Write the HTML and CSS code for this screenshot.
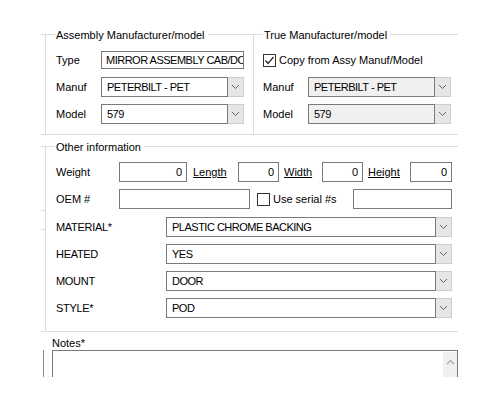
FILE: index.html
```html
<!DOCTYPE html>
<html lang="en">
<head>
    <meta charset="UTF-8">
    <meta name="viewport" content="width=device-width, initial-scale=1.0">
    <title>Part Details</title>
    <link rel="stylesheet" href="styles.css">
</head>
<body>
    <div class="form">
        <div class="top">
            <div class="group assy">
                <div class="legend">
                    <span class="stub"></span>
                    <span class="corner"></span>
                    <span class="legend-text">Assembly Manufacturer/model</span>
                    <span class="rule"></span>
                </div>
                <div class="group-body">
                    <div class="row">
                        <label class="lbl">Type</label>
                        <input class="field type-field" type="text" value="MIRROR ASSEMBLY CAB/DOOR">
                    </div>
                    <div class="row">
                        <label class="lbl">Manuf</label>
                        <div class="combo">
                            <span class="combo-box">PETERBILT - PET</span>
                            <span class="combo-btn"><svg width="9" height="6" viewBox="0 0 9 6"><polyline points="1,1 4.5,4.5 8,1" fill="none" stroke="#666" stroke-width="1"/></svg></span>
                        </div>
                    </div>
                    <div class="row">
                        <label class="lbl">Model</label>
                        <div class="combo">
                            <span class="combo-box">579</span>
                            <span class="combo-btn"><svg width="9" height="6" viewBox="0 0 9 6"><polyline points="1,1 4.5,4.5 8,1" fill="none" stroke="#666" stroke-width="1"/></svg></span>
                        </div>
                    </div>
                </div>
            </div>

            <div class="group true">
                <div class="legend">
                    <span class="corner"></span>
                    <span class="legend-text">True Manufacturer/model</span>
                    <span class="rule"></span>
                </div>
                <div class="group-body">
                    <div class="row">
                        <span class="check checked"><svg width="11" height="11" viewBox="0 0 11 11"><polyline points="1.5,5.5 4,8.5 9.5,2" fill="none" stroke="#222" stroke-width="1.2"/></svg></span>
                        <span class="check-text">Copy from Assy Manuf/Model</span>
                    </div>
                    <div class="row">
                        <label class="lbl">Manuf</label>
                        <div class="combo disabled">
                            <span class="combo-box">PETERBILT - PET</span>
                            <span class="combo-btn"><svg width="9" height="6" viewBox="0 0 9 6"><polyline points="1,1 4.5,4.5 8,1" fill="none" stroke="#666" stroke-width="1"/></svg></span>
                        </div>
                    </div>
                    <div class="row">
                        <label class="lbl">Model</label>
                        <div class="combo disabled">
                            <span class="combo-box">579</span>
                            <span class="combo-btn"><svg width="9" height="6" viewBox="0 0 9 6"><polyline points="1,1 4.5,4.5 8,1" fill="none" stroke="#666" stroke-width="1"/></svg></span>
                        </div>
                    </div>
                </div>
            </div>
        </div>

        <div class="group other">
            <div class="legend">
                <span class="stub"></span>
                <span class="corner"></span>
                <span class="legend-text">Other information</span>
                <span class="rule"></span>
            </div>
            <div class="other-wrap">
                <div class="gutter">
                    <span class="tick tick-1"></span>
                    <span class="tick tick-2"></span>
                </div>
                <div class="group-body">
                    <div class="row">
                        <label class="lbl wide">Weight</label>
                        <input class="field num w-weight" type="text" value="0">
                        <a class="dim dim-length">Length</a>
                        <input class="field num w-small" type="text" value="0">
                        <a class="dim dim-width">Width</a>
                        <input class="field num w-small" type="text" value="0">
                        <a class="dim dim-height">Height</a>
                        <input class="field num w-height" type="text" value="0">
                    </div>
                    <div class="row">
                        <label class="lbl wide">OEM #</label>
                        <input class="field w-oem" type="text" value="">
                        <span class="check serial"></span>
                        <span class="check-text">Use serial #s</span>
                        <input class="field w-serial" type="text" value="">
                    </div>

                    <div class="attrs">
                        <div class="row">
                            <label class="lbl attr">MATERIAL*</label>
                            <div class="combo grow">
                                <span class="combo-box">PLASTIC CHROME BACKING</span>
                                <span class="combo-btn"><svg width="9" height="6" viewBox="0 0 9 6"><polyline points="1,1 4.5,4.5 8,1" fill="none" stroke="#666" stroke-width="1"/></svg></span>
                            </div>
                        </div>
                        <div class="row">
                            <label class="lbl attr">HEATED</label>
                            <div class="combo grow">
                                <span class="combo-box">YES</span>
                                <span class="combo-btn"><svg width="9" height="6" viewBox="0 0 9 6"><polyline points="1,1 4.5,4.5 8,1" fill="none" stroke="#666" stroke-width="1"/></svg></span>
                            </div>
                        </div>
                        <div class="row">
                            <label class="lbl attr">MOUNT</label>
                            <div class="combo grow">
                                <span class="combo-box">DOOR</span>
                                <span class="combo-btn"><svg width="9" height="6" viewBox="0 0 9 6"><polyline points="1,1 4.5,4.5 8,1" fill="none" stroke="#666" stroke-width="1"/></svg></span>
                            </div>
                        </div>
                        <div class="row">
                            <label class="lbl attr">STYLE*</label>
                            <div class="combo grow">
                                <span class="combo-box">POD</span>
                                <span class="combo-btn"><svg width="9" height="6" viewBox="0 0 9 6"><polyline points="1,1 4.5,4.5 8,1" fill="none" stroke="#666" stroke-width="1"/></svg></span>
                            </div>
                        </div>
                    </div>
                </div>
            </div>
        </div>

        <div class="notes">
            <label class="notes-label">Notes*</label>
            <div class="notes-body">
                <div class="notes-box">
                    <div class="notes-text"></div>
                    <div class="scrollbar">
                        <svg width="9" height="6" viewBox="0 0 9 6"><polyline points="1,5 4.5,1.5 8,5" fill="none" stroke="#a6a6a6" stroke-width="1.2"/></svg>
                    </div>
                </div>
            </div>
        </div>
    </div>
</body>
</html>
```

FILE: styles.css
```css
body {
    margin: 0;
    background: #ffffff;
    font-family: "Liberation Sans", Arial, sans-serif;
    font-size: 11px;
    color: #000;
}
.form {
    width: 417px;
    margin-left: 41px;
    padding-top: 28px;
}

/* group boxes */
.top {
    display: flex;
    border-bottom: 1px solid #dcdcdc;
}
.group {
    display: flex;
    flex-direction: column;
}
.assy {
    width: 212px;
}
.true {
    flex: 1;
}
.legend {
    display: flex;
    align-items: center;
    height: 13px;
}
.stub {
    width: 4px;
    height: 1px;
    background: #dcdcdc;
}
.corner {
    width: 9px;
    height: 6px;
    align-self: flex-end;
    border-left: 1px solid #dcdcdc;
    border-top: 1px solid #dcdcdc;
}
.legend-text {
    padding: 0 3px 0 1px;
    white-space: nowrap;
}
.rule {
    flex: 1;
    height: 1px;
    background: #dcdcdc;
}
.group-body {
    flex: 1;
    display: flex;
    flex-direction: column;
    gap: 7px;
    border-left: 1px solid #dcdcdc;
    padding: 9px 0 10px 10px;
}
.assy .group-body {
    margin-left: 4px;
}
.true .group-body {
    padding-left: 9px;
}

/* rows */
.row {
    display: flex;
    align-items: center;
    height: 20px;
}
.lbl {
    width: 45px;
    flex-shrink: 0;
}
.lbl.wide {
    width: 63px;
}
.lbl.attr {
    width: 110px;
    letter-spacing: -0.3px;
}

/* inputs */
.field {
    box-sizing: border-box;
    height: 20px;
    margin: 0;
    padding: 0 4px;
    border: 1px solid #7a7a7a;
    background: #fff;
    font-family: inherit;
    font-size: 11px;
    color: #000;
    outline: none;
}
.type-field {
    width: 143px;
    height: 18px;
    padding-right: 0;
    letter-spacing: -0.5px;
}
.num {
    text-align: right;
    padding-right: 4px;
}
.w-weight { width: 68px; }
.w-small { width: 41px; }
.w-height { width: 42px; }
.w-oem { width: 131px; }
.w-serial {
    width: 99px;
    margin-left: auto;
}
.dim {
    box-sizing: border-box;
    text-decoration: underline;
    padding-left: 5px;
}
.dim-length { width: 51px; padding-left: 6px; }
.dim-width { width: 43px; }
.dim-height { width: 47px; }

/* combos */
.combo {
    display: flex;
    width: 143px;
    height: 20px;
}
.combo.grow {
    flex: 1;
    width: auto;
}
.combo-box {
    flex: 1;
    display: flex;
    align-items: center;
    padding-left: 5px;
    border: 1px solid #7a7a7a;
    background: #fff;
    white-space: nowrap;
    overflow: hidden;
    letter-spacing: -0.5px;
}
.combo.disabled .combo-box {
    background: #f0f0f0;
}
.combo-btn {
    width: 15px;
    display: flex;
    align-items: center;
    justify-content: center;
    background: #e6e6e6;
    border: 1px solid #cccccc;
    border-left: none;
}

/* checkboxes */
.check {
    box-sizing: border-box;
    width: 13px;
    height: 13px;
    border: 1px solid #333;
    background: #fff;
    display: flex;
    align-items: center;
    justify-content: center;
    flex-shrink: 0;
}
.check-text {
    margin-left: 3px;
    white-space: nowrap;
}
.check.serial {
    margin-left: 7px;
}

/* other information */
.other {
    margin-top: 5px;
    border-bottom: 1px solid #dcdcdc;
}
.other-wrap {
    display: flex;
}
.gutter {
    width: 4px;
    display: flex;
    flex-direction: column;
}
.tick {
    height: 1px;
    background: #dcdcdc;
}
.tick-1 { margin-top: 57px; }
.tick-2 { margin-top: 18px; }
.other .group-body {
    padding: 9px 6px 13px 10px;
}
.attrs {
    display: flex;
    flex-direction: column;
    gap: 7px;
    margin-top: 1px;
}

/* notes */
.notes {
    padding-top: 5px;
}
.notes-label {
    display: block;
    height: 13px;
    margin-left: 11px;
}
.notes-body {
    height: 27px;
    overflow: hidden;
    margin-left: 2px;
    padding-left: 8px;
    border-left: 1px solid #8c8c8c;
}
.notes-box {
    display: flex;
    height: 60px;
    border: 1px solid #7a7a7a;
    border-bottom: none;
}
.notes-text {
    flex: 1;
}
.scrollbar {
    width: 14px;
    margin-top: 1px;
    background: #f0f0f0;
    display: flex;
    justify-content: center;
    align-items: flex-start;
    padding-top: 7px;
}
```
